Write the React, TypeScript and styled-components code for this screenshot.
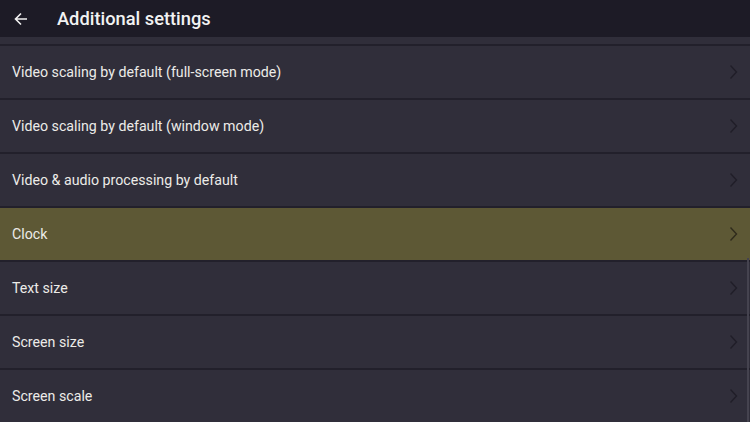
import React, { useLayoutEffect, useRef } from 'react'
import styled, { createGlobalStyle } from 'styled-components'

const GlobalStyle = createGlobalStyle`
    html, body {
        margin: 0;
        padding: 0;
        background: #1d1b26;
    }
    body {
        font-family: Roboto, "Noto Sans", "Liberation Sans", sans-serif;
        -webkit-font-smoothing: antialiased;
    }
`

const Screen = styled.div`
    position: relative;
    width: 750px;
    height: 422px;
    display: flex;
    flex-direction: column;
    overflow: hidden;
    background: #22202b;
`

const Header = styled.div`
    height: 37px;
    flex: 0 0 37px;
    display: flex;
    align-items: center;
    background: #1d1b26;
    color: #f2f2f2;
`

const BackButton = styled.div`
    width: 57px;
    height: 37px;
    flex: 0 0 57px;
    display: flex;
    align-items: center;
    padding-left: 14px;
    box-sizing: border-box;

    svg {
        display: block;
    }
`

const Title = styled.div`
    font-size: 18.3px;
    line-height: 22px;
    font-weight: 500;
    white-space: nowrap;
`

const List = styled.div`
    flex: 1;
    overflow: hidden;
    display: flex;
    flex-direction: column;
    gap: 2px;
`

const Row = styled.div<{ $active?: boolean }>`
    flex: 0 0 52px;
    height: 52px;
    display: flex;
    align-items: center;
    justify-content: space-between;
    padding: 0 12px 0 12px;
    background: ${p => (p.$active ? '#5d5835' : '#302e3a')};
    color: #ecebe8;
    font-size: 14.2px;

    svg {
        color: ${p => (p.$active ? '#2f2b1c' : '#201e28')};
    }
`

const Thumb = styled.div`
    position: absolute;
    right: 1px;
    top: 258px;
    width: 2px;
    height: 164px;
    background: #45434f;
`

const Chevron = () => (
    <svg width="10" height="18" viewBox="0 0 10 18" fill="none">
        <path d="M2.5 2.5 L8.5 9 L2.5 15.5" stroke="currentColor" strokeWidth="1.4" />
    </svg>
)

const items = [
    'Frame rate matching',
    'Video scaling by default (full-screen mode)',
    'Video scaling by default (window mode)',
    'Video & audio processing by default',
    'Clock',
    'Text size',
    'Screen size',
    'Screen scale',
]

export default function App() {
    const listRef = useRef<HTMLDivElement>(null)

    // list is scrolled a little, the previous row peeks out under the header
    useLayoutEffect(() => {
        if (listRef.current) listRef.current.scrollTop = 46
    }, [])

    return (
        <>
            <GlobalStyle />
            <Screen>
                <Header>
                    <BackButton>
                        <svg width="14" height="14" viewBox="0 0 14 14" fill="none">
                            <path d="M13 7 H1.5 M7 1.5 L1.5 7 L7 12.5" stroke="#f2f2f2" strokeWidth="1.6" />
                        </svg>
                    </BackButton>
                    <Title>Additional settings</Title>
                </Header>
                <List ref={listRef}>
                    {items.map((label, index) => (
                        <Row key={index} $active={label === 'Clock'}>
                            <span>{label}</span>
                            <Chevron />
                        </Row>
                    ))}
                </List>
                <Thumb />
            </Screen>
        </>
    )
}
